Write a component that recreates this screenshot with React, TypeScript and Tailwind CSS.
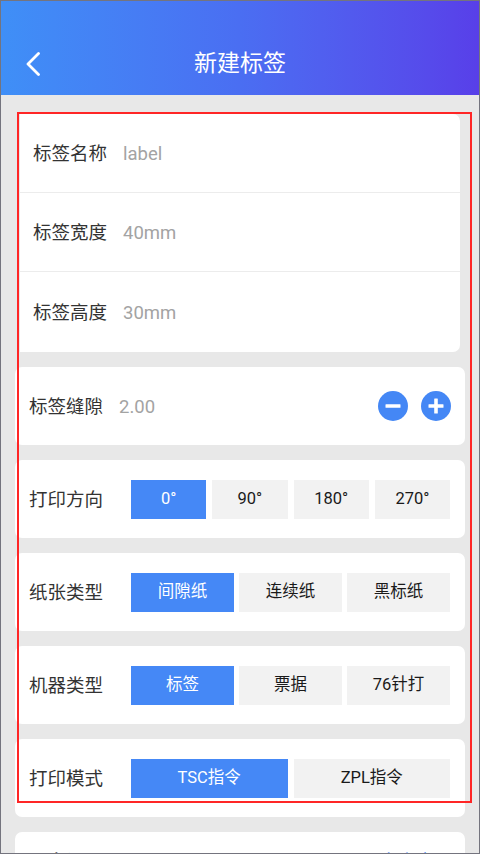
import type { ReactNode } from "react";

const font = { fontFamily: 'Roboto, "Noto Sans CJK SC", sans-serif' };

const Card = ({ children, className = "" }: { children: ReactNode; className?: string }) => (
	<div className={`bg-white rounded-[7px] ${className}`}>{children}</div>
);

const InputRow = ({ label, value, divider }: { label: string; value: string; divider?: boolean }) => (
	<div
		className={`h-[79px] flex items-center pl-[13px] pt-[4px] ${divider ? "border-b border-[#ececec]" : "h-[80px]"}`}
	>
		<span className="text-[18.5px] text-[#333]">{label}</span>
		<span className="ml-[16px] text-[18.5px] text-[#a3a3a3]">{value}</span>
	</div>
);

const OptionRow = ({ label, options, active }: { label: string; options: string[]; active: number }) => (
	<Card className="h-[78px] flex items-center pl-[14px] pr-[15px]">
		<span className="w-[102px] shrink-0 pt-[3px] text-[18.5px] text-[#333]">{label}</span>
		<div className={`flex-1 flex ${options.length === 3 ? "gap-[5px]" : "gap-[6px]"}`}>
			{options.map((o, i) => (
				<div
					key={o}
					className={`flex-1 h-[39px] flex items-center justify-center text-[16.5px] ${
						i === active ? "bg-[#4588f6] text-white" : "bg-[#f2f2f2] text-[#1a1a1a]"
					}`}
				>
					{o}
				</div>
			))}
		</div>
	</Card>
);

const RoundIcon = ({ plus }: { plus?: boolean }) => (
	<svg width="30" height="30" viewBox="0 0 30 30">
		<circle cx="15" cy="15" r="15" fill="#4487f5" />
		<rect x="7.5" y="13.2" width="15" height="3.6" rx="0.5" fill="#fff" />
		{plus && <rect x="13.2" y="7.5" width="3.6" height="15" rx="0.5" fill="#fff" />}
	</svg>
);

export default function App() {
	return (
		<div
			className="relative w-[480px] h-[854px] overflow-hidden bg-[#e8e8e8] border border-[#74747e]"
			style={font}
		>
			<header className="h-[94px] pt-[32px] bg-gradient-to-r from-[#3f8ff7] via-[#4a6ef2] to-[#583fe9]">
				<div className="h-[62px] flex items-center px-[25px]">
					<svg width="14" height="24" viewBox="0 0 14 24" className="shrink-0">
						<polyline
							points="12.5,1.5 2,12 12.5,22.5"
							fill="none"
							stroke="#fff"
							strokeWidth="2.8"
							strokeLinecap="round"
							strokeLinejoin="round"
						/>
					</svg>
					<h1 className="flex-1 text-center text-[23px] text-white pr-[14px]">新建标签</h1>
				</div>
			</header>

			<main className="pt-[19px] px-[14px] flex flex-col gap-[15px]">
				<Card className="mx-[5px] rounded-tl-none rounded-bl-none">
					<InputRow label="标签名称" value="label" divider />
					<InputRow label="标签宽度" value="40mm" divider />
					<InputRow label="标签高度" value="30mm" />
				</Card>

				<Card className="h-[78px] flex items-center pl-[14px] pr-[14px]">
					<span className="pt-[3px] text-[18.5px] text-[#333]">标签缝隙</span>
					<span className="ml-[16px] pt-[3px] text-[18.5px] text-[#a3a3a3]">2.00</span>
					<div className="ml-auto flex gap-[13px]">
						<RoundIcon />
						<RoundIcon plus />
					</div>
				</Card>

				<OptionRow label="打印方向" options={["0°", "90°", "180°", "270°"]} active={0} />
				<OptionRow label="纸张类型" options={["间隙纸", "连续纸", "黑标纸"]} active={0} />
				<OptionRow label="机器类型" options={["标签", "票据", "76针打"]} active={0} />
				<OptionRow label="打印模式" options={["TSC指令", "ZPL指令"]} active={0} />

				<Card className="h-[78px] flex items-start pt-[17px] pl-[14px] pr-[30px]">
					<span className="text-[18.5px] text-[#333]">更多设置</span>
					<span className="ml-auto text-[18.5px] text-[#4487f5]">自定义</span>
				</Card>
			</main>

			<div className="absolute left-[16px] top-[111px] w-[455px] h-[691px] border-2 border-[#ff2626] pointer-events-none" />
		</div>
	);
}
